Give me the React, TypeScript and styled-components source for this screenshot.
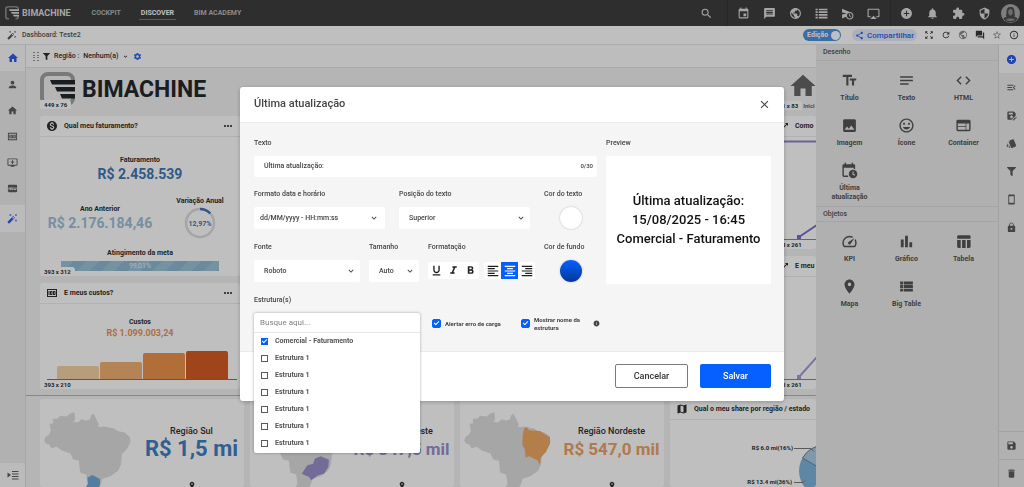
import React from "react";
import styled, { createGlobalStyle, css } from "styled-components";
import {
  MdAddCircle, MdAddToQueue, MdAirplay, MdAutoFixHigh, MdBarChart, MdClose, MdCode, MdDelete,
  MdEvent, MdExtension, MdFiberNew, MdFormatAlignCenter, MdFormatAlignLeft, MdFormatAlignRight,
  MdFormatBold, MdFormatItalic, MdFormatUnderlined, MdForum, MdHome,
  MdImage, MdInfo, MdInfoOutline, MdInsertEmoticon, MdKeyboardArrowDown, MdLock, MdMap,
  MdMenuOpen, MdMessage, MdMoney, MdMonetizationOn, MdMoreHoriz, MdNotes, MdNotifications,
  MdPerson, MdPlace, MdPublic, MdRefresh, MdSave, MdSaveAs, MdScheduleSend, MdSearch, MdSecurity,
  MdSettings, MdShare, MdSpeed, MdStarBorder, MdStayCurrentPortrait, MdStyle, MdTableChart,
  MdTextFields, MdTrendingUp, MdViewList, MdWeb, MdZoomOutMap,
} from "react-icons/md";
import { FaFilter } from "react-icons/fa";

const blue = "#0560ff";

const GlobalStyle = createGlobalStyle`
  *, *::before, *::after { box-sizing: border-box; }
  body { margin: 0; background: #efefef; }
  body, button, input, select { font-family: Roboto, "Liberation Sans", sans-serif; }
  button { border: 0; padding: 0; background: none; color: inherit; cursor: pointer; }
  svg { display: block; flex-shrink: 0; }
`;

const Page = styled.div`
  display: flex;
  flex-direction: column;
  height: 100vh;
  overflow: hidden;
  color: #2f2f2f;
  font-size: 8px;
  line-height: 12px;
`;

/* ---------- top bar ---------- */

const TopBar = styled.header`
  display: flex;
  align-items: center;
  flex: 0 0 26px;
  padding: 0 4px 0 5px;
  background: #3e3e3e;
  color: #dedede;
`;

const Brand = styled.div<{ $large?: boolean }>`
  display: flex;
  align-items: center;
  gap: ${(p) => (p.$large ? 7 : 3)}px;
  color: ${(p) => (p.$large ? "#25282b" : "#dedede")};
  font-size: ${(p) => (p.$large ? 23 : 9)}px;
  line-height: 1;
  font-weight: 700;
`;

const Nav = styled.nav`
  display: flex;
  gap: 16px;
  margin-left: 19px;
`;

const NavLink = styled.a<{ $active?: boolean }>`
  padding: 0 2px;
  border-bottom: 1px solid ${(p) => (p.$active ? "#4a78ff" : "transparent")};
  color: ${(p) => (p.$active ? "#ffffff" : "#b9b9b9")};
  font-size: 7px;
  font-weight: 700;
  text-decoration: none;
`;

const TopTools = styled.div`
  display: flex;
  align-items: center;
  align-self: stretch;
  margin-left: auto;
`;

const TopGroup = styled.div<{ $divided?: boolean }>`
  display: flex;
  align-items: center;
  align-self: stretch;
  padding: 0 ${(p) => (p.$divided ? 4 : 8)}px 0 2px;
  border-left: ${(p) => (p.$divided ? "1px solid #353535" : "0")};
`;

const TopButton = styled.button`
  display: grid;
  place-items: center;
  width: 26px;
  height: 26px;
`;

/* ---------- sub bar ---------- */

const SubBar = styled.div`
  display: flex;
  align-items: center;
  flex: 0 0 19px;
  padding: 0 2px 0 7px;
  border-bottom: 1px solid #e6e6e6;
  background: #ffffff;
  color: #555555;
`;

const Crumb = styled.span`
  margin: 0 auto 0 5px;
  font-size: 7px;
  font-weight: 500;
`;

const EditSwitch = styled.label`
  display: flex;
  align-items: center;
  justify-content: space-between;
  width: 38px;
  height: 12px;
  margin-right: 11px;
  padding: 0 1px 0 4px;
  border-radius: 6px;
  background: #4c93dd;
  color: #ffffff;
  font-size: 7px;
  font-weight: 700;
  input {
    appearance: none;
    width: 9px;
    height: 9px;
    margin: 0;
    border-radius: 50%;
    background: #ffffff;
  }
`;

const ShareButton = styled.button`
  display: flex;
  align-items: center;
  gap: 3px;
  height: 12px;
  margin-right: 3px;
  padding: 0 3px;
  border-radius: 6px;
  background: #e4ebfb;
  color: #2f62ee;
  font-size: 8px;
  font-weight: 500;
`;

const SmallButton = styled.button<{ $muted?: boolean }>`
  display: grid;
  place-items: center;
  width: 17px;
  height: 17px;
  color: ${(p) => (p.$muted ? "#8a8a8a" : "#3a3a3a")};
`;

/* ---------- body shell ---------- */

const Shell = styled.div`
  display: flex;
  flex: 1;
  min-height: 0;
`;

const Rail = styled.aside<{ $side: "left" | "right" }>`
  display: flex;
  flex-direction: column;
  flex: 0 0 26px;
  background: #ececec;
  color: #5c5c5c;
  ${(p) =>
    p.$side === "left"
      ? css`border-right: 1px solid #dedede;`
      : css`border-left: 1px solid #d8d8d8;`}
`;

const RailGroup = styled.div<{ $top?: number; $bottom?: boolean }>`
  display: flex;
  flex-direction: column;
  margin-top: ${(p) => (p.$bottom ? "auto" : `${p.$top ?? 0}px`)};
`;

const RailButton = styled.button<{ $height: number; $active?: boolean; $lined?: boolean; $light?: boolean }>`
  display: grid;
  place-items: center;
  height: ${(p) => p.$height}px;
  border-top: ${(p) => (p.$lined ? "1px solid #dadada" : "0")};
  background: ${(p) => (p.$active || p.$light ? "#fafafa" : "transparent")};
  color: ${(p) => (p.$active ? "#2f5cf0" : "inherit")};
`;

const Canvas = styled.main`
  display: flex;
  flex-direction: column;
  flex: 1;
  min-width: 0;
  overflow: hidden;
  background: #f2f2f2;
`;

const FilterBar = styled.div`
  display: flex;
  align-items: center;
  flex: 0 0 23px;
  gap: 4px;
  padding-left: 7px;
  border-bottom: 1px solid #e2e2e2;
  background: #fdfdfd;
  font-size: 7px;
  font-weight: 500;
`;

const FilterGear = styled.button`
  color: #2f6bea;
`;

const Board = styled.div`
  display: grid;
  grid-template-columns: 200px 1fr 45px;
  grid-template-rows: 41px 273px;
  row-gap: 7px;
  padding: 0 0 6px 14px;
  border-bottom: 1px solid #b4b4b4;
`;

const LogoTile = styled.div`
  position: relative;
  grid-column: 1 / 3;
  padding: 4px 0 0;
`;

const HomeTile = styled.div`
  display: flex;
  flex-direction: column;
  align-items: center;
  width: 64px;
  padding-top: 3px;
  color: #666666;
`;

const HomeCaption = styled.div`
  display: flex;
  align-items: center;
  gap: 1px;
  align-self: flex-start;
  font-size: 6px;
  line-height: 9px;
  font-weight: 700;
`;

const CardStack = styled.div<{ $first: number }>`
  display: grid;
  grid-template-rows: ${(p) => p.$first}px 1fr;
  gap: 7px;
  min-width: 0;
`;

const Card = styled.section`
  position: relative;
  min-width: 0;
  border-radius: 3px;
  background: #ffffff;
  overflow: hidden;
`;

const CardHeader = styled.header`
  display: flex;
  align-items: center;
  gap: 6px;
  height: 21px;
  padding: 0 6px;
  border-bottom: 1px solid #ececec;
  white-space: nowrap;
  h2 {
    flex: 1;
    margin: 0;
    font-size: 7px;
    line-height: 12px;
    font-weight: 700;
  }
`;

const SizeTag = styled.span<{ $inline?: boolean }>`
  position: ${(p) => (p.$inline ? "static" : "absolute")};
  left: 0;
  bottom: 0;
  padding: 0 4px;
  border-radius: 0 3px 0 0;
  background: #ffffff;
  color: #2f2f2f;
  font-size: 6px;
  line-height: 9px;
  font-weight: 700;
  white-space: nowrap;
`;

const Metric = styled.div<{ $color: string; $size: number; $line: number }>`
  display: flex;
  flex-direction: column;
  align-items: center;
  font-size: 7px;
  font-weight: 700;
  white-space: nowrap;
  strong {
    color: ${(p) => p.$color};
    font-size: ${(p) => p.$size}px;
    line-height: ${(p) => p.$line}px;
    font-weight: 700;
  }
`;

const Revenue = styled.div`
  display: flex;
  flex-direction: column;
  padding-top: 17px;
`;

const RevenueSplit = styled.div`
  display: grid;
  grid-template-columns: 1fr 80px;
  align-items: center;
  margin: 13px 0 8px;
`;

const GoalBar = styled.div`
  align-self: center;
  width: 158px;
  height: 10px;
  margin-top: 2px;
  background: repeating-linear-gradient(135deg, #9dc3da 0 9px, #8fb8d2 9px 18px);
  color: #e6f0f6;
  font-size: 7px;
  line-height: 10px;
  text-align: center;
`;

const Costs = styled.div`
  display: flex;
  flex-direction: column;
  padding-top: 12px;
`;

const Regions = styled.div`
  display: grid;
  grid-template-columns: 204px 204px 204px minmax(145px, 1fr);
  flex: 1;
  gap: 6px;
  min-height: 0;
  padding: 3px 0 0 14px;
`;

const RegionBody = styled.div`
  display: grid;
  grid-template-columns: 87px 1fr;
  gap: 8px;
  padding: 13px 0 0 4px;
`;

const RegionText = styled.div`
  display: flex;
  flex-direction: column;
  align-items: center;
  padding-top: 12px;
  white-space: nowrap;
`;

const RegionName = styled.span`
  font-size: 9px;
  line-height: 14px;
  font-weight: 500;
`;

const RegionValue = styled.strong<{ $color: string; $size: number }>`
  margin-bottom: 21px;
  color: ${(p) => p.$color};
  font-size: ${(p) => p.$size}px;
  line-height: 22px;
  font-weight: 700;
`;

/* ---------- component palette ---------- */

const Palette = styled.aside`
  flex: 0 0 182px;
  background: #ebebeb;
  color: #555555;
`;

const PaletteTitle = styled.h3<{ $ruled?: boolean }>`
  height: 16px;
  margin: 0;
  padding: 0 7px;
  border-top: ${(p) => (p.$ruled ? "1px solid #dddddd" : "0")};
  border-bottom: 1px solid #dddddd;
  font-size: 7px;
  line-height: 15px;
  font-weight: 500;
`;

const PaletteGrid = styled.div`
  display: grid;
  grid-template-columns: repeat(3, 1fr);
  padding: 0 6px 4px 5px;
`;

const PaletteItem = styled.button`
  display: flex;
  flex-direction: column;
  align-items: center;
  gap: 5px;
  min-height: 45px;
  padding-top: 11px;
  font-size: 7px;
  line-height: 9px;
  font-weight: 700;
`;

/* ---------- dialog ---------- */

const Backdrop = styled.div`
  position: fixed;
  inset: 0;
  display: flex;
  align-items: center;
  justify-content: center;
  background: rgba(0, 0, 0, 0.25);
`;

const Dialog = styled.div`
  width: 544px;
  max-width: 100%;
  border-radius: 3px;
  background: #ffffff;
  box-shadow: 0 1px 4px rgba(0, 0, 0, 0.25);
  color: #444444;
  font-size: 7px;
  line-height: 12px;
`;

const DialogHeader = styled.header`
  display: flex;
  align-items: center;
  justify-content: space-between;
  height: 36px;
  padding: 0 13px 0 14px;
  border-bottom: 1px solid #ebebeb;
  h1 {
    margin: 0;
    font-size: 11px;
    line-height: 16px;
    font-weight: 500;
  }
`;

const DialogBody = styled.div`
  display: grid;
  grid-template-columns: 1fr 165px;
  gap: 9px;
  padding: 14px 13px 16px 14px;
  background: #f5f5f5;
`;

const Form = styled.form`
  display: flex;
  flex-direction: column;
  gap: 12px;
  min-width: 0;
`;

const FormRow = styled.div<{ $columns: string; $gap: number }>`
  display: grid;
  grid-template-columns: ${(p) => p.$columns};
  gap: ${(p) => p.$gap}px;
`;

const Field = styled.div`
  position: relative;
  display: flex;
  flex-direction: column;
  gap: 7px;
  min-width: 0;
`;

const FieldLabel = styled.label`
  height: 12px;
  font-weight: 500;
  white-space: nowrap;
`;

const TextBox = styled.div`
  display: flex;
  align-items: center;
  height: 21px;
  margin-bottom: -1px;
  padding: 0 4px 0 10px;
  border-radius: 2px;
  background: #ffffff;
  font-size: 6px;
  font-weight: 500;
  input {
    flex: 1;
    min-width: 0;
    padding: 0;
    border: 0;
    outline: 0;
    background: none;
    color: #444444;
    font-size: 7px;
    font-weight: 500;
  }
`;

const SelectBox = styled.div<{ $inset: number; $pad: number }>`
  display: grid;
  align-items: center;
  height: 22px;
  border-radius: 2px;
  background: #ffffff;
  select, svg { grid-area: 1 / 1; }
  select {
    appearance: none;
    width: 100%;
    height: 22px;
    padding: 0 16px 0 ${(p) => p.$inset}px;
    border: 0;
    outline: 0;
    background: none;
    color: #444444;
    font-size: 7px;
    font-weight: 500;
  }
  svg {
    justify-self: end;
    margin-right: ${(p) => p.$pad}px;
    pointer-events: none;
  }
`;

const Swatch = styled.button<{ $fill: string }>`
  align-self: center;
  width: 22px;
  height: 22px;
  border-radius: 50%;
  background: ${(p) => p.$fill};
  box-shadow: 0 0 2px rgba(0, 0, 0, 0.25);
`;

const FormatBar = styled.div`
  display: flex;
  align-items: center;
  gap: 5px;
  height: 22px;
`;

const FormatGroup = styled.div`
  display: flex;
  border-radius: 2px;
  background: #ffffff;
`;

const FormatButton = styled.button<{ $active?: boolean }>`
  display: grid;
  place-items: center;
  width: 17px;
  height: 17px;
  background: ${(p) => (p.$active ? blue : "transparent")};
  color: ${(p) => (p.$active ? "#ffffff" : "#1f1f1f")};
`;

const Tick = styled.input<{ $size: number }>`
  position: relative;
  appearance: none;
  flex-shrink: 0;
  width: ${(p) => p.$size}px;
  height: ${(p) => p.$size}px;
  margin: 0;
  border: 1px solid #5a5a5a;
  border-radius: ${(p) => (p.$size > 7 ? 2 : 0)}px;
  &:checked {
    border-color: ${blue};
    background: ${blue};
  }
  &:checked::after {
    content: "";
    position: absolute;
    left: ${(p) => (p.$size > 7 ? 1 : 0)}px;
    top: ${(p) => (p.$size > 7 ? 1 : 0)}px;
    width: 5px;
    height: 3px;
    border: solid #ffffff;
    border-width: 0 0 1px 1px;
    transform: rotate(-45deg);
  }
`;

const Options = styled.div`
  display: grid;
  grid-template-columns: 75px 58px 1fr;
  align-items: center;
  gap: 14px;
  height: 22px;
  padding-left: 178px;
`;

const Option = styled.label`
  display: flex;
  align-items: center;
  gap: 4px;
  font-size: 6px;
  line-height: 8px;
  font-weight: 700;
  white-space: nowrap;
`;

const Menu = styled.div`
  position: absolute;
  top: 19px;
  left: 0;
  z-index: 1;
  width: 166px;
  border-radius: 2px;
  background: #ffffff;
  box-shadow: 0 0 3px rgba(0, 0, 0, 0.35);
`;

const MenuSearch = styled.input`
  display: block;
  width: 100%;
  height: 20px;
  padding: 0 6px;
  border: 0;
  border-bottom: 1px solid #e6e6e6;
  outline: 0;
  background: none;
  font-size: 8px;
  &::placeholder { color: #808080; opacity: 1; }
`;

const MenuItem = styled.label`
  display: flex;
  align-items: center;
  gap: 7px;
  height: 17px;
  padding-left: 7px;
  color: #555555;
  font-size: 7px;
  font-weight: 700;
  &:last-child { margin-bottom: 1px; }
`;

const Preview = styled.div`
  display: grid;
  place-items: center;
  height: 128px;
  background: #ffffff;
  color: #111111;
  font-size: 13px;
  line-height: 19px;
  font-weight: 500;
  text-align: center;
  p { margin: 0; }
`;

const DialogFooter = styled.footer`
  display: flex;
  justify-content: flex-end;
  gap: 12px;
  padding: 12px 13px 13px;
  border-top: 1px solid #ebebeb;
`;

const ActionButton = styled.button<{ $primary?: boolean }>`
  width: ${(p) => (p.$primary ? 71 : 73)}px;
  height: 24px;
  border-radius: 2px;
  font-size: 9px;
  font-weight: 500;
  ${(p) =>
    p.$primary
      ? css`background: ${blue}; color: #ffffff;`
      : css`border: 1px solid #7a7a7a; color: #333333;`}
`;

/* ---------- drawings ---------- */

function BrandMark({ size, frame, bars }: { size: number; frame: string; bars: string }) {
  return (
    <svg width={size} height={size} viewBox="0 0 35 35" aria-hidden="true">
      <path d="M10 32H8a6 6 0 0 1-6-6V8a6 6 0 0 1 6-6h19a6 6 0 0 1 6 6M33 25v1a6 6 0 0 1-6 6h-1" fill="none" stroke={frame} strokeWidth="4" />
      <path d="M10 8h25v4.500H12zM15 15h20v4.500H17zM20 22h15v4.500H22z" fill={bars} />
    </svg>
  );
}

function ListIcon({ size = 13 }: { size?: number }) {
  return (
    <svg width={size} height={size} viewBox="0 0 24 24" fill="currentColor" aria-hidden="true">
      <path d="M1 3h4v3H1zM7 3h16v3H7zM1 8h4v3H1zM7 8h16v3H7zM1 13h4v3H1zM7 13h16v3H7zM1 18h4v3H1zM7 18h16v3H7z" />
    </svg>
  );
}

function CalendarClock({ size = 17 }: { size?: number }) {
  return (
    <svg width={size} height={size} viewBox="0 0 24 24" fill="currentColor" aria-hidden="true">
      <path d="M10 21H4a2 2 0 0 1-2-2V5a2 2 0 0 1 2-2h1V1h2v2h8V1h2v2h1a2 2 0 0 1 2 2v5h-2V8H4v11h6z" />
      <path fillRule="evenodd" d="M17 11a6 6 0 1 1 0 12 6 6 0 0 1 0-12zm-.8 2.500v4l3 1.900.8-1.300-2.300-1.400v-3.200z" />
    </svg>
  );
}

function ExpandMenu() {
  return (
    <svg width="12" height="12" viewBox="0 0 24 24" fill="currentColor" aria-hidden="true">
      <path d="M1 7l7 5-7 5zM10 4h13v2H10zM10 9h13v2H10zM10 14h13v2H10zM10 19h13v2H10z" />
    </svg>
  );
}

function Grip() {
  return (
    <svg width="6" height="9" viewBox="0 0 6 9" fill="#9a9a9a" aria-hidden="true">
      <path d="M0 0h2v1H0zM4 0h2v1H4zM0 3h2v1H0zM4 3h2v1H4zM0 5h2v1H0zM4 5h2v1H4zM0 8h2v1H0zM4 8h2v1H4z" />
    </svg>
  );
}

function Donut() {
  return (
    <svg width="32" height="32" viewBox="0 0 32 32" aria-hidden="true">
      <circle cx="16" cy="16" r="14" fill="none" stroke="#dcdcdc" strokeWidth="2.500" />
      <path d="M16 2a14 14 0 0 1 10.200 4.400" fill="none" stroke="#3f77b5" strokeWidth="2.500" />
      <text x="16" y="18.500" textAnchor="middle" fontSize="7" fontWeight="700" fill="#3f77b5">12,97%</text>
    </svg>
  );
}

function CostBars() {
  return (
    <svg width="200" height="44" viewBox="0 0 200 44" aria-hidden="true">
      <path d="M17 40V29q0-2 2-2h38q2 0 2 2v11z" fill="#f5d2a4" />
      <path d="M60 40V25q0-2 2-2h38q2 0 2 2v15z" fill="#f0b174" />
      <path d="M103 40V16q0-2 2-2h38q2 0 2 2v24z" fill="#ec934c" />
      <path d="M146 40V14q0-2 2-2h38q2 0 2 2v26z" fill="#d65b26" />
      <path d="M7 40.500h190" stroke="#777777" />
    </svg>
  );
}

const brazil =
  "M148 462L160 460 157 447 172 446 178 438 198 440 205 433 220 427 222 448 215 456 232 458 242 448 256 452 270 448 272 436 278 432 288 452 293 462 290 472 312 470 340 476 352 484 372 488 386 500 388 515 378 535 362 552 360 580 352 600 330 616 305 624 298 645 285 662 250 662 262 640 258 612 240 606 236 570 218 566 210 548 185 540 168 528 152 532 148 522 136 518 132 510 136 500 146 494 152 480z";

const regionShapes = {
  sul: "M260 622L275 614 298 626 298 645 285 662 250 662 262 640z",
  sudeste: "M273 610L290 585 308 580 312 565 330 558 355 568 353 590 340 610 322 615 302 630 295 620z",
  nordeste: "M310 475L318 470 325 480 358 482 370 490 388 500 388 520 376 545 360 562 358 585 350 570 325 558 315 562 312 535 305 525 306 495z",
};

function BrazilMap({ region, fill }: { region: keyof typeof regionShapes; fill: string }) {
  return (
    <svg width="87" height="80" viewBox="130 425 261 240" aria-hidden="true">
      <path d={brazil} fill="#dedede" strokeLinejoin="round" stroke="#dedede" strokeWidth="3" />
      <path d={regionShapes[region]} fill={fill} />
    </svg>
  );
}

function TrendChart({ top, color, rise }: { top?: boolean; color: string; rise: number }) {
  return (
    <svg width="64" height="103" viewBox="0 0 64 103" fill="none" aria-hidden="true">
      {top && <path d="M0 4.500h64" stroke="#8f83cc" strokeWidth="2" />}
      <path d="M4 102.500h60" stroke="#8a8a8a" />
      <path d={`M28 100L46 ${100 - rise}`} stroke={color} strokeWidth="2" />
      <path d="M26 98h4v4h-4z" fill={color} />
    </svg>
  );
}

function SharePie() {
  return (
    <svg width="184" height="68" viewBox="0 0 184 68" fontSize="6" fontWeight="700" fill="#2f2f2f" aria-hidden="true">
      <circle cx="155" cy="51" r="26" fill="#7db4dc" />
      <path d="M155 51L132.500 38A26 26 0 0 1 155 25z" fill="#a9cde4" stroke="#6b8796" />
      <path d="M124 28.500h17l3 3M124 62.500h9l2-2" fill="none" stroke="#777777" />
      <text x="123" y="30" textAnchor="end">R$ 6.0 mi(16%)</text>
      <text x="122" y="64" textAnchor="end">R$ 13.4 mi(36%)</text>
    </svg>
  );
}

/* ---------- sections ---------- */

const icon = (I: React.ComponentType<{ size?: number }>, size = 12) => <I size={size} />;

const topMain = [
  ["Calendário", MdEvent], ["Mensagens", MdMessage], ["Publicações", MdPublic],
  ["Listas", ListIcon], ["Agendamentos", MdScheduleSend], ["Apresentação", MdAirplay],
] as const;
const topSide = [
  ["Adicionar", MdAddCircle], ["Notificações", MdNotifications],
  ["Extensões", MdExtension], ["Segurança", MdSecurity],
] as const;
const pageTools = [
  ["Expandir", MdZoomOutMap], ["Atualizar", MdRefresh], ["Público", MdPublic],
  ["Comentários", MdForum], ["Favorito", MdStarBorder], ["Informações", MdInfoOutline],
] as const;
const leftTools = [
  ["Início", MdHome], ["Usuário", MdPerson], ["Casa", MdHome],
  ["Valores", MdMoney], ["Nova tela", MdAddToQueue], ["Novidades", MdFiberNew],
] as const;
const rightTools = [
  ["Adicionar objeto", MdAddCircle], ["Menu", MdMenuOpen], ["Salvar como", MdSaveAs],
  ["Temas", MdStyle], ["Filtros", FaFilter], ["Celular", MdStayCurrentPortrait], ["Bloquear", MdLock],
] as const;
const drawing = [
  ["Título", MdTextFields], ["Texto", MdNotes], ["HTML", MdCode], ["Imagem", MdImage],
  ["Ícone", MdInsertEmoticon], ["Container", MdWeb], ["Última atualização", CalendarClock],
] as const;
const objects = [
  ["KPI", MdSpeed], ["Gráfico", MdBarChart], ["Tabela", MdTableChart],
  ["Mapa", MdPlace], ["Big Table", MdViewList],
] as const;
const regions = [
  { name: "Região Sul", value: "R$ 1,5 mi", shape: "sul", map: "#6fa9da", color: "#3f7fc4", size: 22 },
  { name: "Região Sudeste", value: "R$ 347,5 mil", shape: "sudeste", map: "#9a90cc", color: "#9a90cc", size: 17 },
  { name: "Região Nordeste", value: "R$ 547,0 mil", shape: "nordeste", map: "#f0a865", color: "#eba366", size: 17 },
] as const;

function Select({ id, value, inset, pad }: { id: string; value: string; inset: number; pad: number }) {
  return (
    <SelectBox $inset={inset} $pad={pad}>
      <select id={id} defaultValue={value}><option>{value}</option></select>
      <MdKeyboardArrowDown size={10} />
    </SelectBox>
  );
}

function UpdateDialog() {
  return (
    <Backdrop>
      <Dialog role="dialog" aria-modal="true" aria-labelledby="dialog-title">
        <DialogHeader>
          <h1 id="dialog-title">Última atualização</h1>
          <button type="button" aria-label="Fechar"><MdClose size={13} /></button>
        </DialogHeader>
        <DialogBody>
          <Form>
            <Field>
              <FieldLabel htmlFor="text">Texto</FieldLabel>
              <TextBox><input id="text" defaultValue="Última atualização:" /><span>0/30</span></TextBox>
            </Field>
            <FormRow $columns="1fr 1fr 53px" $gap={14}>
              <Field>
                <FieldLabel htmlFor="format">Formato data e horário</FieldLabel>
                <Select id="format" value="dd/MM/yyyy - HH:mm:ss" inset={6} pad={6} />
              </Field>
              <Field>
                <FieldLabel htmlFor="position">Posição do texto</FieldLabel>
                <Select id="position" value="Superior" inset={10} pad={4} />
              </Field>
              <Field>
                <FieldLabel as="span">Cor do texto</FieldLabel>
                <Swatch type="button" $fill="#ffffff" aria-label="Cor do texto" />
              </Field>
            </FormRow>
            <FormRow $columns="1fr 50px 107px 53px" $gap={9}>
              <Field>
                <FieldLabel htmlFor="font">Fonte</FieldLabel>
                <Select id="font" value="Roboto" inset={10} pad={4} />
              </Field>
              <Field>
                <FieldLabel htmlFor="size">Tamanho</FieldLabel>
                <Select id="size" value="Auto" inset={10} pad={4} />
              </Field>
              <Field>
                <FieldLabel as="span">Formatação</FieldLabel>
                <FormatBar>
                  <FormatGroup>
                    <FormatButton type="button" aria-label="Sublinhado">{icon(MdFormatUnderlined, 13)}</FormatButton>
                    <FormatButton type="button" aria-label="Itálico">{icon(MdFormatItalic, 13)}</FormatButton>
                    <FormatButton type="button" aria-label="Negrito">{icon(MdFormatBold, 13)}</FormatButton>
                  </FormatGroup>
                  <FormatGroup>
                    <FormatButton type="button" aria-label="Alinhar à esquerda">{icon(MdFormatAlignLeft, 14)}</FormatButton>
                    <FormatButton type="button" aria-label="Centralizar" $active>{icon(MdFormatAlignCenter, 14)}</FormatButton>
                    <FormatButton type="button" aria-label="Alinhar à direita">{icon(MdFormatAlignRight, 14)}</FormatButton>
                  </FormatGroup>
                </FormatBar>
              </Field>
              <Field>
                <FieldLabel as="span">Cor de fundo</FieldLabel>
                <Swatch type="button" $fill="linear-gradient(#0560ff, #03379a)" aria-label="Cor de fundo" />
              </Field>
            </FormRow>
            <Field>
              <FieldLabel htmlFor="structure">Estrutura(s)</FieldLabel>
              <Menu>
                <MenuSearch id="structure" placeholder="Busque aqui..." />
                <MenuItem><Tick type="checkbox" $size={7} defaultChecked />Comercial - Faturamento</MenuItem>
                {[1, 2, 3, 4, 5, 6].map((n) => (
                  <MenuItem key={n}><Tick type="checkbox" $size={7} />Estrutura 1</MenuItem>
                ))}
              </Menu>
              <Options>
                <Option><Tick type="checkbox" $size={9} defaultChecked />Alertar erro de carga</Option>
                <Option><Tick type="checkbox" $size={9} defaultChecked /><span>Mostrar nome da<br />estrutura</span></Option>
                <MdInfo size={7} />
              </Options>
            </Field>
          </Form>
          <Field>
            <FieldLabel as="span">Preview</FieldLabel>
            <Preview>
              <p>Última atualização:<br />15/08/2025 - 16:45<br />Comercial - Faturamento</p>
            </Preview>
          </Field>
        </DialogBody>
        <DialogFooter>
          <ActionButton type="button">Cancelar</ActionButton>
          <ActionButton type="button" $primary>Salvar</ActionButton>
        </DialogFooter>
      </Dialog>
    </Backdrop>
  );
}

export default function App() {
  return (
    <>
      <GlobalStyle />
      <Page>
        <TopBar>
          <Brand><BrandMark size={14} frame="#8e8e8e" bars="#dedede" />BIMACHINE</Brand>
          <Nav>
            <NavLink href="#cockpit">COCKPIT</NavLink>
            <NavLink href="#discover" $active>DISCOVER</NavLink>
            <NavLink href="#academy">BIM ACADEMY</NavLink>
          </Nav>
          <TopTools>
            <TopGroup><TopButton aria-label="Buscar">{icon(MdSearch, 13)}</TopButton></TopGroup>
            <TopGroup $divided>
              {topMain.map(([name, I]) => <TopButton key={name} aria-label={name}>{icon(I, 13)}</TopButton>)}
            </TopGroup>
            <TopGroup $divided>
              {topSide.map(([name, I]) => <TopButton key={name} aria-label={name}>{icon(I, 13)}</TopButton>)}
            </TopGroup>
            <svg width="19" height="19" viewBox="0 0 19 19" aria-hidden="true">
              <circle cx="9.500" cy="9.500" r="9.500" fill="#a8a8a8" />
              <path d="M9.500 3c3 0 4 2 4 5s1 3 0 5c2 .4 3 1.200 3 2a9 9 0 0 1-14 0c0-.8 1-1.600 3-2-1-2 0-2 0-5s1-5 4-5z" fill="#4a4a4a" />
              <path d="M9.500 5c1.500 0 2.300 1 2.300 3s-1 3.500-2.300 3.500S7.200 10 7.200 8 8 5 9.500 5zM5 15.500c1-1.500 8-1.500 9 0-2 2-7 2-9 0z" fill="#8f8f8f" />
            </svg>
          </TopTools>
        </TopBar>

        <SubBar>
          {icon(MdAutoFixHigh, 10)}
          <Crumb>Dashboard: Teste2</Crumb>
          <EditSwitch>Edição<input type="checkbox" role="switch" defaultChecked /></EditSwitch>
          <ShareButton>{icon(MdShare, 9)}Compartilhar</ShareButton>
          {pageTools.map(([name, I]) => (
            <SmallButton key={name} aria-label={name} $muted={name === "Público" || name === "Favorito"}>{icon(I, 10)}</SmallButton>
          ))}
        </SubBar>

        <Shell>
          <Rail $side="left">
            <RailGroup>
              {leftTools.map(([name, I], i) => (
                <RailButton key={name} aria-label={name} $height={26} $active={i === 0}>{icon(I, i === 0 ? 12 : 11)}</RailButton>
              ))}
            </RailGroup>
            <RailGroup $top={4}>
              <RailButton aria-label="Edição rápida" $height={27} $active>{icon(MdAutoFixHigh, 11)}</RailButton>
            </RailGroup>
            <RailGroup $bottom>
              <RailButton aria-label="Expandir menu" $height={24} $light><ExpandMenu /></RailButton>
            </RailGroup>
          </Rail>

          <Canvas>
            <FilterBar>
              <Grip />
              {icon(FaFilter, 7)}
              <span>Região :</span>
              <span>Nenhum(a)</span>
              {icon(MdKeyboardArrowDown, 7)}
              <FilterGear aria-label="Configurar filtro">{icon(MdSettings, 9)}</FilterGear>
            </FilterBar>
            <Board>
              <LogoTile>
                <Brand $large><BrandMark size={35} frame="#a2a2a2" bars="#25282b" />BIMACHINE</Brand>
                <SizeTag>449 x 76</SizeTag>
              </LogoTile>
              <HomeTile>
                {icon(MdHome, 30)}
                <HomeCaption><SizeTag $inline>161 x 83</SizeTag>Inici</HomeCaption>
              </HomeTile>
              <CardStack $first={160}>
                <Card>
                  <CardHeader>{icon(MdMonetizationOn, 12)}<h2>Qual meu faturamento?</h2>{icon(MdMoreHoriz, 12)}</CardHeader>
                  <Revenue>
                    <Metric $color="#3f77b5" $size={14} $line={16}>Faturamento<strong>R$ 2.458.539</strong></Metric>
                    <RevenueSplit>
                      <Metric $color="#9cc0d8" $size={14} $line={16}>Ano Anterior<strong>R$ 2.176.184,46</strong></Metric>
                      <Metric $color="#3f77b5" $size={7} $line={8}>Variação Anual<Donut /></Metric>
                    </RevenueSplit>
                    <Metric $color="#3f77b5" $size={7} $line={8}>Atingimento da meta</Metric>
                    <GoalBar>99,01%</GoalBar>
                  </Revenue>
                  <SizeTag>393 x 312</SizeTag>
                </Card>
                <Card>
                  <CardHeader>{icon(MdMoney, 12)}<h2>E meus custos?</h2>{icon(MdMoreHoriz, 12)}</CardHeader>
                  <Costs>
                    <Metric $color="#e8935a" $size={9} $line={11}>Custos<strong>R$ 1.099.003,24</strong></Metric>
                    <CostBars />
                  </Costs>
                  <SizeTag>393 x 210</SizeTag>
                </Card>
              </CardStack>
              <div />
              <CardStack $first={133}>
                <Card>
                  <CardHeader>{icon(MdTrendingUp, 12)}<h2>Como</h2></CardHeader>
                  <TrendChart top color="#7a6cc4" rise={12} />
                  <SizeTag>393 x 261</SizeTag>
                </Card>
                <Card>
                  <CardHeader>{icon(MdTrendingUp, 12)}<h2>E meu</h2></CardHeader>
                  <TrendChart color="#a79bd6" rise={20} />
                  <SizeTag>393 x 261</SizeTag>
                </Card>
              </CardStack>
            </Board>
            <Regions>
              {regions.map((r) => (
                <Card key={r.name}>
                  <RegionBody>
                    <BrazilMap region={r.shape} fill={r.map} />
                    <RegionText>
                      <RegionName>{r.name}</RegionName>
                      <RegionValue $color={r.color} $size={r.size}>{r.value}</RegionValue>
                      {icon(MdPlace, 8)}
                    </RegionText>
                  </RegionBody>
                </Card>
              ))}
              <Card>
                <CardHeader>{icon(MdMap, 12)}<h2>Qual o meu share por região / estado</h2></CardHeader>
                <SharePie />
              </Card>
            </Regions>
          </Canvas>

          <Palette>
            <PaletteTitle>Desenho</PaletteTitle>
            <PaletteGrid>
              {drawing.map(([name, I]) => <PaletteItem key={name}>{icon(I, 17)}{name}</PaletteItem>)}
            </PaletteGrid>
            <PaletteTitle $ruled>Objetos</PaletteTitle>
            <PaletteGrid>
              {objects.map(([name, I]) => <PaletteItem key={name}>{icon(I, 17)}{name}</PaletteItem>)}
            </PaletteGrid>
          </Palette>

          <Rail $side="right">
            <RailGroup>
              {rightTools.map(([name, I], i) => (
                <RailButton key={name} aria-label={name} $height={28} $active={i === 0}>{icon(I, I === FaFilter ? 9 : 11)}</RailButton>
              ))}
            </RailGroup>
            <RailGroup $bottom>
              <RailButton aria-label="Salvar painel" $height={28} $lined>{icon(MdSave, 11)}</RailButton>
              <RailButton aria-label="Excluir" $height={28} $lined>{icon(MdDelete, 11)}</RailButton>
            </RailGroup>
          </Rail>
        </Shell>
      </Page>
      <UpdateDialog />
    </>
  );
}
